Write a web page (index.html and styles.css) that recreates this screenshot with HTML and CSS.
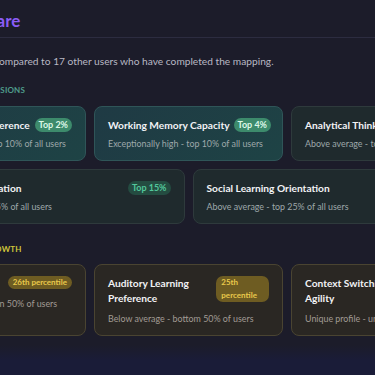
FILE: index.html
```html
<!DOCTYPE html>
<html lang="en">
<head>
<meta charset="UTF-8">
<meta name="viewport" content="width=device-width, initial-scale=1.0">
<title>How You Compare</title>
<link rel="stylesheet" href="styles.css">
</head>
<body>

    <div class="page">
        <div class="head">
            <h1>How You Compare</h1>
        </div>

        <p class="intro">Your cognitive profile compared to 17 other users who have completed the mapping.</p>

        <!-- sterkste dimensies -->
        <div class="label strong">Your Strongest Dimensions</div>
        <div class="cards">
            <div class="card top">
                <div class="card-head">
                    <div class="card-title">Visual Content Preference</div>
                    <span class="badge">Top 2%</span>
                </div>
                <div class="card-sub">Exceptionally high - top 10% of all users</div>
            </div>
            <div class="card top">
                <div class="card-head">
                    <div class="card-title">Working Memory Capacity</div>
                    <span class="badge">Top 4%</span>
                </div>
                <div class="card-sub">Exceptionally high - top 10% of all users</div>
            </div>
            <div class="card">
                <div class="card-head">
                    <div class="card-title">Analytical Thinking</div>
                    <span class="badge">Top 18%</span>
                </div>
                <div class="card-sub">Above average - top 25% of all users</div>
            </div>
            <div class="card">
                <div class="card-head">
                    <div class="card-title">Visuospatial Orientation</div>
                    <span class="badge">Top 15%</span>
                </div>
                <div class="card-sub">Strong ranking - top 15% of all users</div>
            </div>
            <div class="card">
                <div class="card-head">
                    <div class="card-title">Social Learning Orientation</div>
                    <span class="badge">Top 22%</span>
                </div>
                <div class="card-sub">Above average - top 25% of all users</div>
            </div>
        </div>

        <!-- groeigebieden -->
        <div class="label grow">Opportunities for Growth</div>
        <div class="cards grow">
            <div class="card low">
                <div class="card-head">
                    <div class="card-title">Verbal Recall</div>
                    <span class="badge pct">26th percentile</span>
                </div>
                <div class="card-sub">Developing - lower than 50% of users</div>
            </div>
            <div class="card low">
                <div class="card-head">
                    <div class="card-title">Auditory Learning Preference</div>
                    <span class="badge pct">25th percentile</span>
                </div>
                <div class="card-sub">Below average - bottom 50% of users</div>
            </div>
            <div class="card low">
                <div class="card-head">
                    <div class="card-title">Context Switching Agility</div>
                    <span class="badge pct">20th percentile</span>
                </div>
                <div class="card-sub">Unique profile - unranked</div>
            </div>
        </div>
    </div>

</body>
</html>
```

FILE: styles.css
```css
body {
    margin: 0;
    font-family: Lato, "Noto Sans", sans-serif;
    background: linear-gradient(to bottom, #1c1c2a 0, #1c1c2a 345px, #1a1c38 360px);
    height: 375px;
    overflow: hidden;
}
.page {
    width: 583px;
    margin-left: -103px;
}
.head {
    border-bottom: 1px solid #2c2c40;
    padding: 9px 0 4px 0;
}
h1 {
    margin: 0 0 0 -17px;
    font-size: 17px;
    line-height: 24px;
    font-weight: 700;
    color: #8b5cf6;
}
.intro {
    margin: 15px 0 0 0;
    font-size: 10.2px;
    line-height: 16px;
    color: #b8b8c4;
}
.label {
    margin-top: 14px;
    font-size: 8px;
    line-height: 14px;
    font-weight: 700;
    text-transform: uppercase;
    letter-spacing: 0.2px;
}
.label.strong {
    color: #4f9e8c;
}
.label.grow {
    margin-top: 18px;
    color: #cfc63a;
}
.cards {
    display: flex;
    flex-wrap: wrap;
    gap: 8px;
    margin-top: 9px;
}
.cards.grow {
    margin-top: 8px;
}
.card {
    flex: 1 1 180px;
    min-width: 0;
    box-sizing: border-box;
    padding: 11px 13px 9px 13px;
    border-radius: 8px;
    background: #1f2a2d;
    border: 1px solid #2e3a3c;
}
.card.top {
    background: linear-gradient(135deg, #1f3a44, #1e4345);
    border-color: #2f5558;
}
.card.low {
    background: #2a2723;
    border-color: #4a4431;
}
.card-head {
    display: flex;
    justify-content: space-between;
    align-items: flex-start;
    gap: 4px;
}
.card-title {
    font-size: 10.2px;
    line-height: 15px;
    font-weight: 700;
    color: #f2f2f5;
    white-space: nowrap;
}
.card.low .card-title {
    white-space: normal;
}
.card-sub {
    margin-top: 4px;
    font-size: 8.9px;
    line-height: 14px;
    color: #9ea8aa;
}
.card.low .card-sub {
    margin-top: 6px;
    color: #a19b94;
}
.badge {
    flex-shrink: 0;
    white-space: nowrap;
    font-size: 9px;
    line-height: 14px;
    font-weight: 700;
    padding: 0 4px;
    border-radius: 7px;
    background: #244c41;
    color: #52c79b;
}
.card.top .badge {
    background: #3d8b6c;
    color: #dcf7e8;
}
.badge.pct {
    flex-shrink: 1;
    white-space: normal;
    font-size: 8px;
    line-height: 13px;
    padding: 0 5px;
    background: #6e5c22;
    color: #e9c94b;
}
```
